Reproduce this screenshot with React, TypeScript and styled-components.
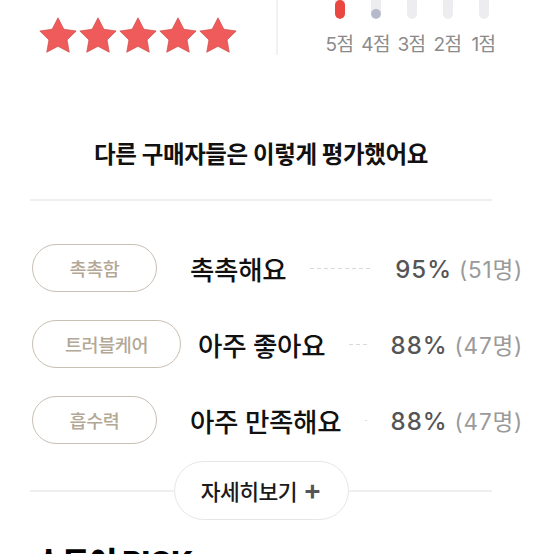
import React from "react";
import styled, { createGlobalStyle } from "styled-components";

const Global = createGlobalStyle`
  html, body { margin: 0; padding: 0; background: #fff; }
  body { font-family: "Inter", "Noto Sans CJK KR", sans-serif; color: #111; overflow: hidden; }
`;

const Page = styled.div`
  width: 554px;
  height: 554px;
  overflow: hidden;
  display: flex;
  flex-direction: column;
`;

const TopRow = styled.div`
  display: flex;
  height: 56px;
`;

const Half = styled.div`
  flex: 1;
  display: flex;
  justify-content: center;
  align-items: flex-start;
`;

const StarsWrap = styled.div`
  display: flex;
  gap: 2px;
  padding-top: 17px;
`;

const VDivider = styled.div`
  width: 2px;
  background: #f1f1f3;
`;

const Distribution = styled.div`
  display: grid;
  grid-template-columns: repeat(5, 36px);
  margin-left: -9px;
`;

const ScoreCol = styled.div`
  display: flex;
  flex-direction: column;
  align-items: center;
`;

const Track = styled.div<{ $fill: number; $color: string }>`
  width: 10px;
  height: 19px;
  border-radius: 0 0 5px 5px;
  background: #ededf0;
  position: relative;
  overflow: hidden;
  &::after {
    content: "";
    position: absolute;
    left: 0;
    right: 0;
    bottom: 0;
    height: ${(p) => p.$fill}px;
    border-radius: 5px;
    background: ${(p) => p.$color};
  }
`;

const ScoreLabel = styled.div`
  margin-top: 16px;
  font-size: 19px;
  line-height: 20px;
  letter-spacing: -0.6px;
  color: #8b8b8b;
  white-space: nowrap;
`;

const Body = styled.div`
  padding-left: 30px;
  display: flex;
  flex-direction: column;
`;

const Title = styled.h2`
  margin: 85px 0 0;
  width: 462px;
  text-align: center;
  font-size: 23.5px;
  line-height: 30px;
  font-weight: 700;
  letter-spacing: -0.4px;
  color: #111;
`;

const HLine = styled.div`
  width: 462px;
  height: 2px;
  background: #efefef;
  margin-top: 29px;
`;

const Rows = styled.div`
  display: flex;
  flex-direction: column;
  gap: 28px;
  margin-top: 43px;
  width: 491px;
  padding-left: 2px;
`;

const Row = styled.div`
  display: flex;
  align-items: center;
  height: 48px;
`;

const PillCell = styled.div`
  min-width: 141px;
  margin-right: 17px;
`;

const Pill = styled.div`
  box-sizing: border-box;
  display: inline-flex;
  align-items: center;
  justify-content: center;
  min-width: 125px;
  height: 48px;
  padding: 0 32px;
  border: 1.5px solid #c9c0b4;
  border-radius: 24px;
  font-size: 18.5px;
  font-weight: 500;
  color: #b3a896;
  letter-spacing: -0.4px;
`;

const Answer = styled.div`
  font-size: 26.5px;
  font-weight: 500;
  letter-spacing: -0.3px;
  color: #111;
  white-space: nowrap;
`;

const Leader = styled.div`
  flex: 1;
  min-width: 0;
  margin: 0 24px;
  height: 1px;
  background-image: linear-gradient(to right, #d9d9d9 60%, transparent 0);
  background-size: 7px 1px;
  background-repeat: repeat-x;
`;

const Percent = styled.span`
  font-size: 24px;
  font-weight: 500;
  color: #555;
  letter-spacing: 1px;
`;

const Count = styled.span`
  margin-left: 7px;
  font-size: 22.5px;
  font-weight: 400;
  color: #9a9a9a;
  letter-spacing: 0.8px;
`;

const Stat = styled.div`
  white-space: nowrap;
  flex-shrink: 0;
`;

const MoreArea = styled.div`
  display: flex;
  align-items: center;
  width: 462px;
  margin-top: 17px;
`;

const Rule = styled.div`
  flex: 1;
  height: 2px;
  background: #efefef;
`;

const MoreButton = styled.button`
  box-sizing: border-box;
  width: 175px;
  height: 59px;
  border: 1.5px solid #e6e6e6;
  border-radius: 30px;
  background: #fff;
  display: flex;
  align-items: center;
  justify-content: center;
  gap: 6px;
  font-family: inherit;
  font-size: 21.5px;
  font-weight: 500;
  color: #1a1a1a;
  letter-spacing: -0.5px;
  padding: 0;
`;

const Plus = styled.span`
  font-size: 28px;
  font-weight: 600;
  color: #555;
  line-height: 1;
  margin-top: -2px;
`;

const Heading = styled.h3`
  margin: 24px 0 0 5px;
  font-size: 30px;
  line-height: 36px;
  font-weight: 800;
  color: #000;
  letter-spacing: -0.5px;
  white-space: nowrap;
`;

const Star = () => (
  <svg width="38" height="36" viewBox="2 2 20 19.02">
    <polygon
      points="12,2.4 15.09,8.46 21.6,9.4 16.8,14.1 17.95,20.6 12,17.5 6.05,20.6 7.2,14.1 2.4,9.4 8.91,8.46"
      fill="#ef5a5a"
      stroke="#cf4848"
      strokeWidth="0.35"
      strokeLinejoin="round"
    />
  </svg>
);

const scores = [
  { label: "5점", fill: 19, color: "#e9473f" },
  { label: "4점", fill: 10, color: "#b6b8cb" },
  { label: "3점", fill: 0, color: "#ededf0" },
  { label: "2점", fill: 0, color: "#ededf0" },
  { label: "1점", fill: 0, color: "#ededf0" },
];

const rows = [
  { tag: "촉촉함", answer: "촉촉해요", pct: "95%", count: "(51명)" },
  { tag: "트러블케어", answer: "아주 좋아요", pct: "88%", count: "(47명)" },
  { tag: "흡수력", answer: "아주 만족해요", pct: "88%", count: "(47명)" },
];

export default function App() {
  return (
    <Page>
      <Global />
      <TopRow>
        <Half>
          <StarsWrap>
            {[0, 1, 2, 3, 4].map((i) => (
              <Star key={i} />
            ))}
          </StarsWrap>
        </Half>
        <VDivider />
        <Half>
          <Distribution>
            {scores.map((s) => (
              <ScoreCol key={s.label}>
                <Track $fill={s.fill} $color={s.color} />
                <ScoreLabel>{s.label}</ScoreLabel>
              </ScoreCol>
            ))}
          </Distribution>
        </Half>
      </TopRow>
      <Body>
        <Title>다른 구매자들은 이렇게 평가했어요</Title>
        <HLine />
        <Rows>
          {rows.map((r) => (
            <Row key={r.tag}>
              <PillCell>
                <Pill>{r.tag}</Pill>
              </PillCell>
              <Answer>{r.answer}</Answer>
              <Leader />
              <Stat>
                <Percent>{r.pct}</Percent>
                <Count>{r.count}</Count>
              </Stat>
            </Row>
          ))}
        </Rows>
        <MoreArea>
          <Rule />
          <MoreButton>
            자세히보기<Plus>+</Plus>
          </MoreButton>
          <Rule />
        </MoreArea>
        <Heading>스토어 PICK</Heading>
      </Body>
    </Page>
  );
}
